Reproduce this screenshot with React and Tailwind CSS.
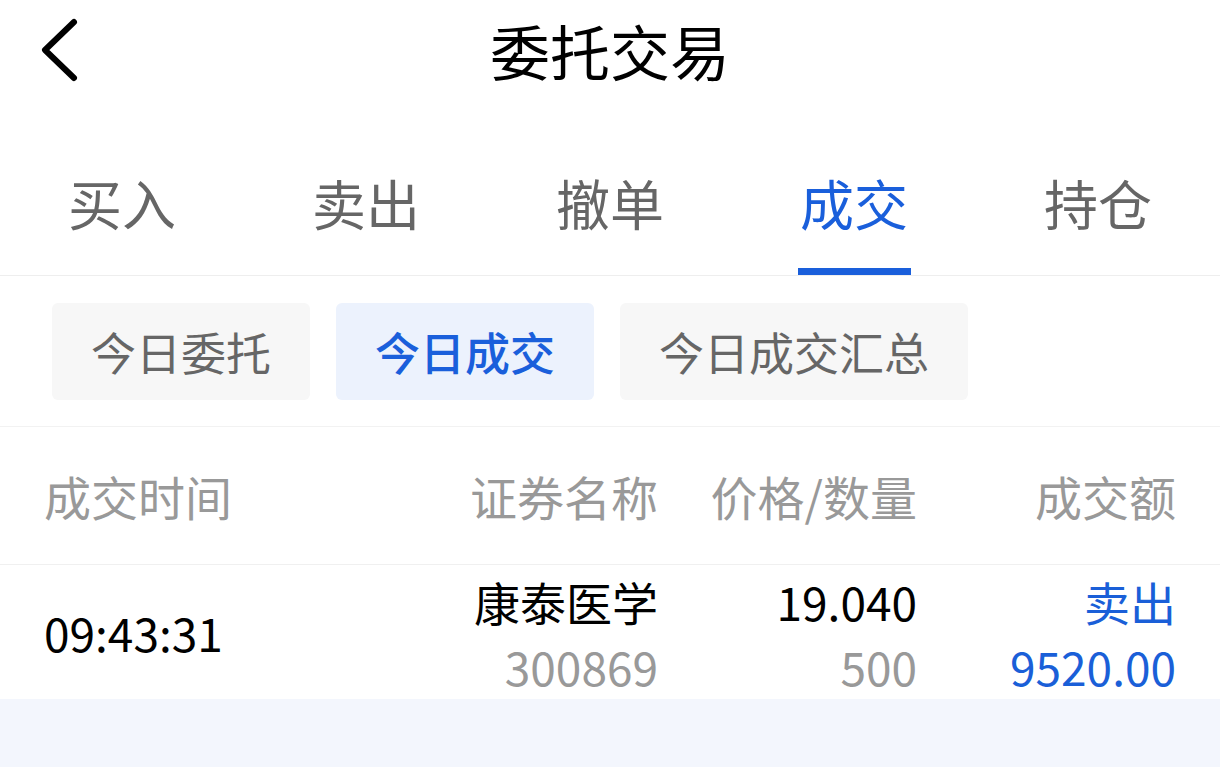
import React, { useState } from 'react';

const tabs = ['买入', '卖出', '撤单', '成交', '持仓'];
const subTabs = ['今日委托', '今日成交', '今日成交汇总'];

export default function App() {
	const [tab, setTab] = useState(3);
	const [sub, setSub] = useState(1);

	return (
		<div className="min-h-screen bg-[#f3f6fd] font-['Noto_Sans_CJK_SC',sans-serif]">
			<div className="bg-white">
				{/* nav bar */}
				<div className="grid grid-cols-[1fr_auto_1fr] items-center h-[100px] px-[40px]">
					<button type="button" className="w-[40px] h-[66px] flex items-center">
						<svg width="40" height="66" viewBox="0 0 40 66" fill="none">
							<path d="M34 5L5 33L34 61" stroke="#000" strokeWidth="6" strokeLinecap="round" strokeLinejoin="round" />
						</svg>
					</button>
					<h1 className="text-[60px] leading-none text-black font-normal">委托交易</h1>
					<div />
				</div>

				{/* main tabs */}
				<div className="flex h-[176px] border-b border-[#eeeeee]">
					{tabs.map((t, i) => (
						<button
							key={t}
							type="button"
							onClick={() => setTab(i)}
							className="flex-1 flex flex-col items-center"
						>
							<span className={`flex-1 flex items-center pt-[38px] text-[54px] leading-none ${tab === i ? 'text-[#1a5fdb]' : 'text-[#666666]'}`}>
								{t}
							</span>
							<span className={`h-[7px] w-[113px] ${tab === i ? 'bg-[#1a5fdb]' : 'bg-transparent'}`} />
						</button>
					))}
				</div>

				{/* sub tabs */}
				<div className="flex gap-[26px] px-[52px] pt-[27px] pb-[26px] border-b border-[#f2f2f2]">
					{subTabs.map((s, i) => (
						<button
							key={s}
							type="button"
							onClick={() => setSub(i)}
							className={`h-[97px] rounded-[6px] whitespace-nowrap text-[45px] leading-none ${i === 2 ? 'w-[348px]' : 'w-[258px]'} ${sub === i ? 'bg-[#ecf2fd] text-[#1a5fdb] font-medium' : 'bg-[#f7f7f7] text-[#666666]'}`}
						>
							{s}
						</button>
					))}
				</div>

				{/* table header */}
				<div className="grid grid-cols-[355px_259px_259px_259px] items-center h-[138px] px-[44px] border-b border-[#f0f0f0] text-[47px] leading-none text-[#999999]">
					<span>成交时间</span>
					<span className="text-right">证券名称</span>
					<span className="text-right">价格/数量</span>
					<span className="text-right">成交额</span>
				</div>

				{/* row */}
				<div className="grid grid-cols-[355px_259px_259px_259px] items-center h-[134px] px-[44px] text-[46px] leading-[65px]">
					<span className="text-black">09:43:31</span>
					<div className="flex flex-col items-end pt-[4px]">
						<span className="text-black">康泰医学</span>
						<span className="text-[#999999]">300869</span>
					</div>
					<div className="flex flex-col items-end pt-[4px]">
						<span className="text-black">19.040</span>
						<span className="text-[#999999]">500</span>
					</div>
					<div className="flex flex-col items-end pt-[4px] text-[#1a5fd8]">
						<span>卖出</span>
						<span>9520.00</span>
					</div>
				</div>
			</div>
		</div>
	);
}
